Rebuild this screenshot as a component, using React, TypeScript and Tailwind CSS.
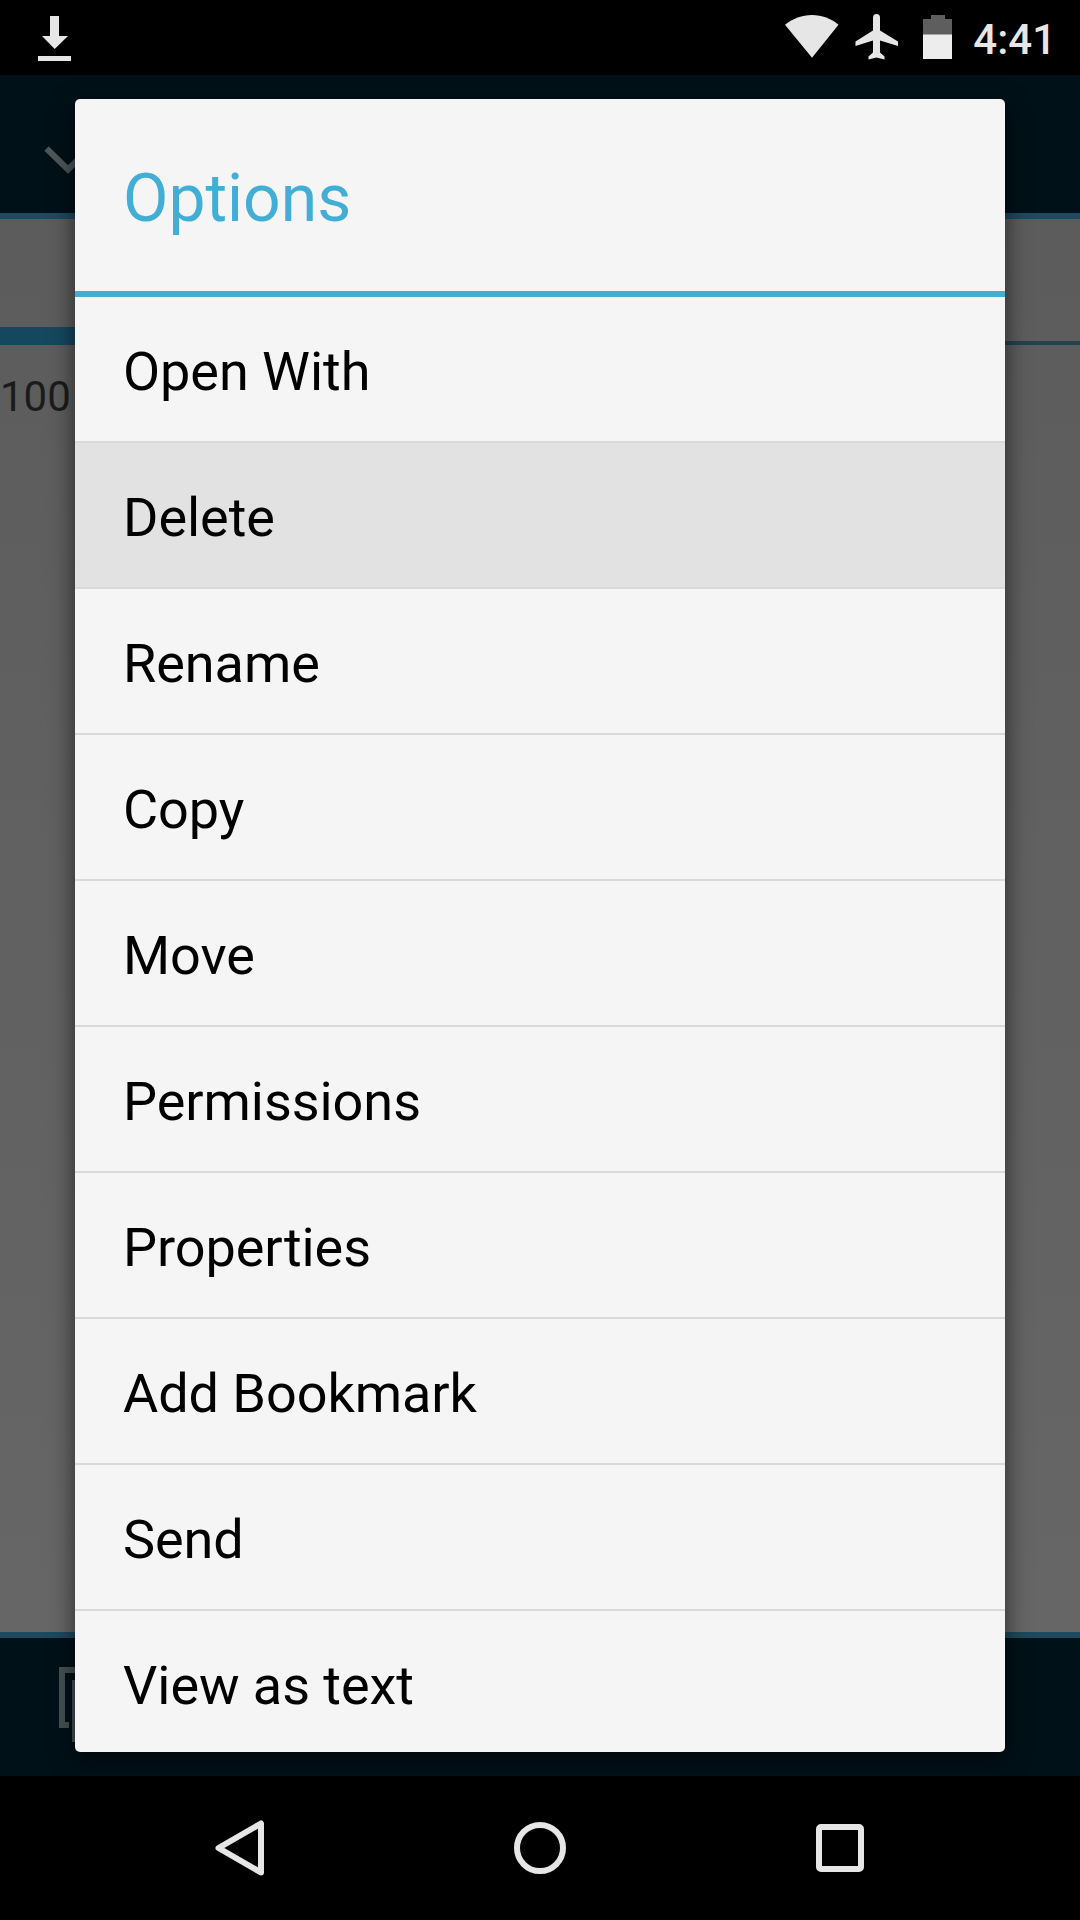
import React from "react";

const OPTIONS = [
  "Open With",
  "Delete",
  "Rename",
  "Copy",
  "Move",
  "Permissions",
  "Properties",
  "Add Bookmark",
  "Send",
  "View as text",
];

function StatusBar() {
  return (
    <header className="h-[75px] shrink-0 bg-black flex items-start justify-between pl-[38px] pr-6 text-[#e6e6e6]">
      <svg className="mt-4" width="33" height="45" viewBox="0 0 33 45" fill="#e6e6e6">
        <path d="M12 0h9v20h9L16.7 33 4 20h8z" />
        <path d="M0 40h33v5H0z" />
      </svg>

      <div className="flex items-start">
        {/* Wifi */}
        <svg className="mt-[15px]" width="54" height="43" viewBox="0 0 54 43" fill="#e6e6e6">
          <path d="M0 9.7C8 3.5 17 0 27 0s19 3.500 26.500 9.700L27 42.700z" />
        </svg>
        {/* Airplane mode */}
        <svg className="mt-[14px] ml-[16px]" width="44" height="46" viewBox="0 0 44 46" fill="#e6e6e6">
          <path d="M18 3.500a3.500 3.500 0 0 1 7 0V16.500L43 27.500V32L25 26.500V38.500L29.500 42.500V45.500L21.500 43.500L13.500 45.500V42.500L18 38.500V26.500L0.500 32V27.500L18 16.500z" />
        </svg>
        {/* Battery */}
        <svg className="mt-[15px] ml-6" width="30" height="44" viewBox="0 0 30 44">
          <path d="M8 0h14v4h7v16H0V4h8z" fill="#5e5e5e" />
          <path d="M0 19.500h29V44H0z" fill="#ededed" />
        </svg>
        <span className="mt-[15px] ml-[20px] text-[42px] leading-[50px] font-medium">4:41</span>
      </div>
    </header>
  );
}

function NavigationBar() {
  return (
    <nav className="h-[144px] shrink-0 bg-black flex items-center justify-center gap-[240px]">
      <svg width="60" height="60" viewBox="0 0 60 60" fill="none" stroke="#e6e6e6" strokeWidth="6" strokeLinejoin="round">
        <path d="M8.500 30L51 5.500v49z" />
      </svg>
      <svg width="60" height="60" viewBox="0 0 60 60" fill="none" stroke="#e6e6e6" strokeWidth="6">
        <circle cx="30" cy="30" r="23" />
      </svg>
      <svg width="60" height="60" viewBox="0 0 60 60" fill="none" stroke="#e6e6e6" strokeWidth="6">
        <rect x="9" y="9" width="42" height="42" rx="2" />
      </svg>
    </nav>
  );
}

function OptionsDialog() {
  return (
    <section className="absolute left-[75px] top-[99px] w-[930px] h-[1653px] overflow-hidden rounded-[5px] bg-[#f5f5f5] shadow-[0_7px_24px_rgba(0,0,0,0.6)]">
      <h1 className="h-[198px] border-b-[6px] border-[#43aed5] pl-12 pt-[7px] flex items-center text-[66px] font-normal text-[#43aed5]">
        Options
      </h1>
      <ul>
        {OPTIONS.map((option) => (
          <li
            key={option}
            className={`h-[146px] border-b-2 border-[#d8d9d9] pl-12 pt-[5px] flex items-center text-[54px] tracking-[-0.05px] text-black ${
              option === "Delete" ? "bg-[#e2e2e2]" : ""
            }`}
          >
            {option}
          </li>
        ))}
      </ul>
    </section>
  );
}

export default function App() {
  return (
    <div className="relative w-[1080px] h-[1920px] flex flex-col overflow-hidden bg-black font-['Roboto',sans-serif]">
      <StatusBar />

      {/* Dimmed file browser behind the dialog */}
      <div className="h-[144px] shrink-0 bg-[#001118] border-b-[6px] border-[#1c4a5f] pl-[44px] pt-[71px]">
        <svg width="48" height="28" viewBox="0 0 48 28" fill="none" stroke="#4d565a" strokeWidth="6">
          <path d="M2.500 2.500L24 23.500L45.500 2.500" />
        </svg>
      </div>
      <main className="flex-1 flex flex-col bg-linear-to-b from-[#5c5c5c] to-[#666666]">
        <div className="h-[126px] flex items-end">
          <div className="w-[360px] h-[18px] bg-[#15485e]" />
          <div className="flex-1 h-1 bg-[#24424c]" />
        </div>
        <p className="pt-[27px] text-[42px] leading-[50px] text-[#1b1b1b]">100</p>
      </main>
      <div className="h-[144px] shrink-0 bg-[#001118] border-t-[6px] border-[#1c4a5f] pl-[59px] pt-[29px]">
        <svg width="60" height="76" viewBox="0 0 60 76" fill="none" stroke="#465153" strokeWidth="6">
          <path d="M10 58H3V3h40v7" />
          <rect x="16" y="16" width="40" height="56" />
        </svg>
      </div>

      <NavigationBar />
      <OptionsDialog />
    </div>
  );
}
